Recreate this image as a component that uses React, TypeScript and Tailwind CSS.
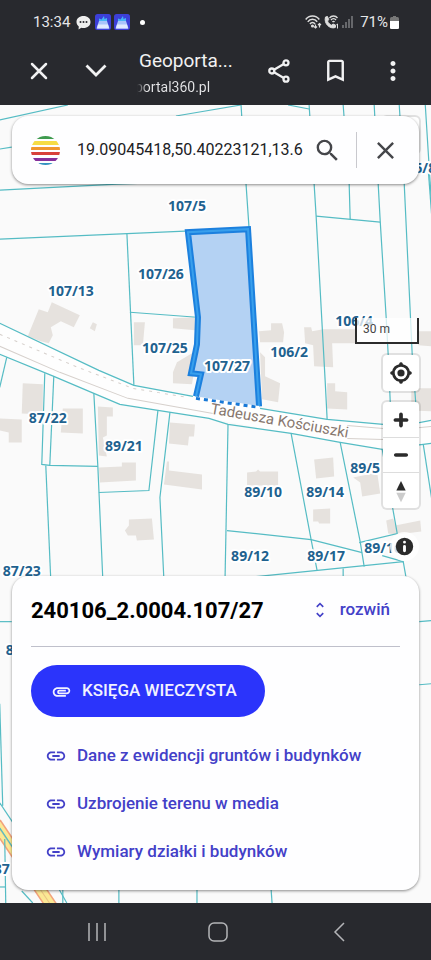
import React, { useState } from 'react';
import {
    MdAttachment,
    MdBookmarkBorder,
    MdClose,
    MdLink,
    MdMoreVert,
    MdSearch,
    MdUnfoldMore,
} from 'react-icons/md';

const PARCEL_LINES = [
    'M0 120 68 105',
    'M0 149 12 147',
    'M176 116 241 105',
    'M0 190 117 184 200 181',
    'M288 105 309 109',
    'M241 105 246 184 249 228',
    'M309 105 314 184 316 216 325 380 327 419',
    'M343 105 349 184 350 219',
    'M374 105 378 184 380 221 386 318 388 355 391 424',
    'M399 105 404 184 412 355 417 423',
    'M425 105 431 200',
    'M428 170 432 223',
    'M316 216 380 222',
    'M0 239 185 231',
    'M127 233 134 385',
    'M130 312 197 317',
    'M0 323 99 370 134 385 193 396',
    'M260 408 327 419 383 424 410 424 431 420',
    'M0 354 54 376 94 393 120 404 158 410 209 418 228 424 291 433 340 442 382 449 423 444 431 443',
    'M7 357 0 387',
    'M45 373 42 464 50 465 98 466',
    'M54 376 50 465',
    'M46 465 51 580',
    'M94 393 98 466 103 580',
    'M99 492 149 490 158 410',
    'M170 412 160 497 164 580',
    'M228 424 225 580',
    'M227 530 311 539 362 552',
    'M291 433 311 539 317 570',
    'M340 442 360 541 364 566',
    'M256 576 364 565 403 561 406 578',
    'M343 568 343 578',
    'M359 542 397 533 382 449',
    'M382 555 403 561',
    'M423 444 432 502',
    'M0 621 12 621',
    'M419 621 431 620',
    'M419 684 431 683',
    'M0 703 3 805',
    'M0 802 14 823',
    'M5 838 6 902',
    'M0 886 6 886',
    'M22 890 33 902',
    'M58 886 67 902',
    'M63 886 63 902',
    'M119 888 119 902',
    'M197 888 197 902',
    'M271 888 272 902',
    'M0 827 14 848',
];

const BUILDINGS = [
    'M39 309 48 312 52 302 80 315 74 327 61 321 51 327 53 335 49 343 41 341 28 336Z',
    'M93 322 97 324 95 331 90 328Z',
    'M134 322 145 322 143 345 134 345Z',
    'M173 318 196 317 195 330 173 328Z',
    'M177 362 192 353 199 351 194 372 192 384 173 383 173 372Z',
    'M23 383 43 384 43 414 22 413Z',
    'M63 408 83 408 83 433 61 432Z',
    'M0 418 22 419 22 442 9 442 9 432 0 430Z',
    'M98 406 113 407 113 416 107 416 107 435 103 437 107 456 99 455Z',
    'M99 467 122 466 122 462 136 462 136 480 100 482Z',
    'M170 422 195 424 194 436 189 436 188 445 169 443Z',
    'M167 461 169 461 169 470 202 474 202 489 164 484Z',
    'M129 519 152 518 154 539 137 540 136 535 128 535 125 530 129 525Z',
    'M259 331 271 330 271 323 282 323 284 332 283 342 260 342Z',
    'M260 352 265 357 265 376 280 383 278 402 262 399Z',
    'M304 327 311 327 312 331 323 329 356 329 356 343 332 343 333 367 314 366 313 345 305 343Z',
    'M327 383 335 383 335 391 347 392 347 409 327 408Z',
    'M418 331 431 331 431 346 418 345Z',
    'M411 388 431 388 431 411 411 410Z',
    'M247 472 256 471 258 469 260 471 278 471 278 485 247 485Z',
    'M314 459 333 457 334 476 316 478Z',
    'M353 477 377 472 380 493 362 496 360 482Z',
    'M313 509 330 508 330 523 319 523 318 521 313 521Z',
    'M386 520 393 518 395 525 420 520 421 531 397 534 388 533Z',
];

const PARCEL_LABELS = [
    { text: '107/5', x: 187, y: 211 },
    { text: '107/26', x: 161, y: 279 },
    { text: '107/13', x: 71, y: 296 },
    { text: '107/25', x: 165, y: 353 },
    { text: '107/27', x: 227, y: 371 },
    { text: '106/2', x: 289, y: 357 },
    { text: '106/4', x: 354, y: 326 },
    { text: '87/22', x: 48, y: 423 },
    { text: '89/21', x: 124, y: 451 },
    { text: '89/10', x: 263, y: 497 },
    { text: '89/14', x: 325, y: 497 },
    { text: '89/5', x: 365, y: 473 },
    { text: '89/12', x: 250, y: 560 },
    { text: '89/17', x: 326, y: 560 },
    { text: '89/16', x: 383, y: 552 },
    { text: '87/23', x: 22, y: 575 },
    { text: '106/8', x: 417, y: 173 },
    { text: '87/5', x: 21, y: 654 },
    { text: '87', x: 2, y: 873 },
];

const LINKS = [
    'Dane z ewidencji gruntów i budynków',
    'Uzbrojenie terenu w media',
    'Wymiary działki i budynków',
];

const LOGO_STRIPES = [
    { color: '#3f9b4f', y: 0, h: 3 },
    { color: '#f6dc45', y: 5, h: 4 },
    { color: '#f0962e', y: 11, h: 3 },
    { color: '#d8413a', y: 16, h: 3 },
    { color: '#85309b', y: 22, h: 3 },
    { color: '#3592c0', y: 27, h: 2 },
];

const PARCEL_PATH = 'M196 396 201 374 191 373 197 344 198 317 188 232 248 229 259 406';

const MapLayer = () => (
    <svg
        className="absolute inset-0 h-full w-full"
        viewBox="0 105 431 797"
        preserveAspectRatio="xMidYMin slice"
        aria-hidden="true"
    >
        <rect x="0" y="105" width="431" height="797" fill="#fafafa" />

        {/* street */}
        <path
            d="M0 323 99 370 134 385 260 408 327 419 383 424 431 420V443L382 449 291 433 209 418 120 404 0 354Z"
            fill="#fefefe"
        />
        <g fill="none" stroke="#d6d0cc">
            <path d="M0 346 60 372 128 398 213 413" />
            <path d="M347 425 383 428 410 428 431 426" />
            <path d="M347 438 383 439" />
            <path d="M0 334 78 367 133 388 187 397" strokeDasharray="3 5" />
        </g>

        <g fill="#e6e2de">
            {BUILDINGS.map((d) => (
                <path key={d} d={d} />
            ))}
        </g>

        {/* main road in the south-west corner */}
        <g fill="none">
            <path d="M-4 822 53 907" stroke="#f2a27c" strokeWidth="12" />
            <path d="M-4 822 53 907" stroke="#fbe894" strokeWidth="9" />
            <path d="M-4 822 53 907" stroke="#e9c384" strokeWidth="1" />
        </g>

        <g fill="none" stroke="#55bcc4" strokeWidth="1.2">
            {PARCEL_LINES.map((d) => (
                <path key={d} d={d} />
            ))}
        </g>

        {/* selected parcel */}
        <path d={`${PARCEL_PATH}Z`} fill="#4a97e8" fillOpacity="0.4" />
        <path d={PARCEL_PATH} fill="none" stroke="#1c80de" strokeWidth="6" />
        <path d={PARCEL_PATH} fill="none" stroke="#389fec" strokeWidth="2" />
        <path d="M196 398 259 407" fill="none" stroke="#fff" strokeWidth="3" />
        <path d="M196 398 259 407" fill="none" stroke="#1878d6" strokeWidth="3" strokeDasharray="4 4" />

        <text
            x="210"
            y="413"
            transform="rotate(10 210 413)"
            className="fill-[#87776e] stroke-white font-['Roboto'] text-[15px] [paint-order:stroke]"
            strokeWidth="2"
        >
            Tadeusza Kościuszki
        </text>

        {PARCEL_LABELS.map((label) => (
            <text
                key={label.text}
                x={label.x}
                y={label.y}
                textAnchor="middle"
                strokeWidth="4"
                strokeLinejoin="round"
                className="fill-[#1f628f] stroke-white font-['Noto_Sans'] text-[14px] font-bold [paint-order:stroke]"
            >
                {label.text}
            </text>
        ))}
    </svg>
);

const AppIcon = () => (
    <svg width="16" height="16" viewBox="0 0 16 16">
        <rect width="16" height="16" rx="2.500" fill="#3c3fd8" />
        <path d="M4 7V4.500l2.500 1L9 2l.5 3L12 4v3Z" fill="#45b4f5" />
        <path d="M4 7h8l2.500 7.500h-13Z" fill="#a9c4fb" />
        <path d="M3 10.500h10l1 4H2Z" fill="#dfe9ff" />
    </svg>
);

const StatusBar = () => (
    <div className="flex h-11 items-center justify-between pr-8 pl-[33px] text-[15px] text-[#e6e6e8]">
        <div className="flex items-center">
            <span>13:34</span>
            <svg className="ml-1.5" width="15" height="15" viewBox="0 0 15 15">
                <path d="M7.500 1C11.600 1 14.500 3.500 14.500 7s-2.900 6-7 6c-.8 0-1.500-.1-2.200-.3L2.500 14.500l.3-3C1.400 10.400.5 8.800.5 7c0-3.500 2.900-6 7-6Z" fill="#eee" />
                <g fill="#28292e">
                    <circle cx="4.500" cy="7" r="1" />
                    <circle cx="7.500" cy="7" r="1" />
                    <circle cx="10.500" cy="7" r="1" />
                </g>
            </svg>
            <div className="ml-1 flex gap-[3px]">
                <AppIcon />
                <AppIcon />
            </div>
            <span className="ml-2.5 h-[5px] w-[5px] rounded-full bg-white" />
        </div>
        <div className="flex items-center">
            <svg width="17" height="14" viewBox="0 0 17 14" fill="none" stroke="#ddd" strokeWidth="1.500">
                <path d="M.7 4.500C4-.2 11-.2 14.300 4.500M2.800 6.800c2.300-3.400 7-3.400 9.400 0M5 9c1.300-2 3.700-2 5 0" />
                <path d="M10.500 9.500V13M9 11.500l1.500 1.500 1.500-1.500M14.500 12.500V8.500M13 10l1.500-1.500L16 10" strokeWidth="1.200" />
                <circle cx="7.500" cy="11" r=".8" />
            </svg>
            <svg className="ml-0.5" width="15" height="14" viewBox="0 0 15 14" fill="none" stroke="#ddd">
                <path d="M1.500 2 3.500 1.500l1.200 3.200L3.500 6C4.200 8 5.800 9.500 7.600 10.200L9 9l2.700 1.200-.4 2.300C6 14.500-.5 8.500 1.500 2Z" fill="#ddd" />
                <path d="M5.500 3c2-2.700 6-2.700 8 0M7 5c1.300-1.800 3.700-1.800 5 0M8.500 7c.6-.8 1.400-.8 2 0" strokeWidth="1.300" />
                <path d="M12.500 9.500 13.500 9v4.500" />
            </svg>
            <svg className="ml-[3px]" width="12" height="12" viewBox="0 0 12 12" fill="#66676b">
                <path d="M0 9h2v3H0zM3 6h2v6H3zM6 3h2v9H6zM9 0h2v12H9z" />
            </svg>
            <span className="ml-1.5">71%</span>
            <svg className="ml-0.5" width="9" height="13" viewBox="0 0 9 13">
                <path d="M3 0h3v1.500H3z" fill="#777" />
                <rect y="1" width="9" height="12" rx="1.500" fill="#777" />
                <path d="M0 5h9v6.500a1.500 1.500 0 0 1-1.500 1.500h-6A1.500 1.500 0 0 1 0 11.500Z" fill="#fff" />
            </svg>
        </div>
    </div>
);

const BrowserBar = () => {
    const button = 'flex h-12 w-[57px] shrink-0 items-center justify-center';
    return (
        <div className="flex h-[53px] items-center px-2.5 text-[#f1f1f2]">
            <button className={button} aria-label="Zamknij">
                <svg width="18" height="18" viewBox="0 0 18 18" fill="none" stroke="currentColor" strokeWidth="2.500" strokeLinecap="round">
                    <path d="M2 2 16 16M16 2 2 16" />
                </svg>
            </button>
            <button className={button} aria-label="Minimalizuj">
                <svg width="22" height="14" viewBox="0 0 22 14" fill="none" stroke="currentColor" strokeWidth="2.800">
                    <path d="M1.500 1.500 11 11l9.500-9.500" />
                </svg>
            </button>
            <div className="min-w-0 flex-1 pt-1.5 pl-[15px]">
                <div className="text-[19px] leading-[26px] whitespace-nowrap">Geoporta...</div>
                <div className="text-[14px] leading-[26px]">
                    <span className="-ml-1 bg-linear-to-r from-transparent from-[2px] to-[#e6e6e8] to-[12px] bg-clip-text text-transparent">
                        portal360.pl
                    </span>
                </div>
            </div>
            <button className={button} aria-label="Udostępnij">
                <svg width="22" height="24" viewBox="0 0 22 24" fill="none" stroke="currentColor" strokeWidth="2.300">
                    <circle cx="18" cy="3.800" r="2.500" />
                    <circle cx="3.800" cy="12" r="2.500" />
                    <circle cx="18" cy="20.200" r="2.500" />
                    <path d="M6 10.700 15.800 5.100M6 13.300l9.800 5.600" />
                </svg>
            </button>
            <button className={button} aria-label="Dodaj zakładkę">
                <MdBookmarkBorder size={29} />
            </button>
            <button className={button} aria-label="Więcej">
                <MdMoreVert size={30} />
            </button>
        </div>
    );
};

const SearchBar = () => {
    const [query, setQuery] = useState('19.09045418,50.40223121,13.6');

    return (
        <form className="relative mx-3 mt-[11px] flex h-[68px] items-center rounded-2xl bg-[#fefeff] pr-[19px] pl-[19px] shadow-[0_1px_3px_rgba(0,0,0,0.45)]">
            <svg width="29" height="29" viewBox="0 0 29 29" className="shrink-0">
                <clipPath id="logo-circle">
                    <circle cx="14.500" cy="14.500" r="14.500" />
                </clipPath>
                <g clipPath="url(#logo-circle)">
                    {LOGO_STRIPES.map((s) => (
                        <rect key={s.color} x="0" y={s.y} width="29" height={s.h} fill={s.color} />
                    ))}
                </g>
            </svg>
            <input
                aria-label="Szukaj działki"
                value={query}
                onChange={(e) => setQuery(e.target.value)}
                className="ml-[17px] min-w-0 flex-1 bg-transparent text-base text-[#202124] outline-none"
            />
            <button type="button" aria-label="Szukaj" className="ml-2 text-[#45464a]">
                <MdSearch size={29} />
            </button>
            <span className="mx-3.5 h-9 w-px bg-[#c9c9ce]" />
            <button type="button" aria-label="Wyczyść" className="text-[#45464a]">
                <MdClose size={29} />
            </button>
        </form>
    );
};

const MapControls = () => {
    const box = 'rounded bg-white shadow-[0_0_0_2px_rgba(0,0,0,0.1)]';
    return (
        <div className="relative mt-auto mr-3 mb-[15px] flex flex-col items-end self-end text-[#2b2b2b]">
            <div className="h-[26px] w-16 border-2 border-t-0 border-[#2b2b2b] bg-white/75 px-1.5 text-[12px] leading-[22px] text-[#444]">
                30 m
            </div>
            <button aria-label="Moja lokalizacja" className={`mt-[11px] h-9 w-9 ${box}`}>
                <svg width="36" height="36" viewBox="0 0 20 20" fill="currentColor">
                    <path d="M10 4C9 4 9 5 9 5v.1A5 5 0 0 0 5.100 9H5s-1 0-1 1 1 1 1 1h.1A5 5 0 0 0 9 14.900v.1s0 1 1 1 1-1 1-1v-.1a5 5 0 0 0 3.900-3.900h.1s1 0 1-1-1-1-1-1h-.1A5 5 0 0 0 11 5.100V5s0-1-1-1zm0 2.500a3.500 3.500 0 1 1 0 7 3.500 3.500 0 1 1 0-7z" />
                    <circle cx="10" cy="10" r="2" />
                </svg>
            </button>
            <div className={`mt-[11px] flex w-9 flex-col divide-y divide-[#ddd] ${box}`}>
                <button aria-label="Przybliż" className="h-9">
                    <svg width="36" height="36" viewBox="0 0 29 29" fill="currentColor">
                        <path d="M14.500 8.500c-.75 0-1.500.75-1.500 1.500v3h-3c-.75 0-1.500.75-1.500 1.500S9.250 16 10 16h3v3c0 .75.75 1.500 1.500 1.500S16 19.750 16 19v-3h3c.75 0 1.500-.75 1.500-1.500S19.750 13 19 13h-3v-3c0-.75-.75-1.500-1.500-1.500z" />
                    </svg>
                </button>
                <button aria-label="Oddal" className="h-[35px]">
                    <svg width="36" height="34" viewBox="0 0 29 29" fill="currentColor">
                        <path d="M10 13c-.75 0-1.500.75-1.500 1.500S9.250 16 10 16h9c.75 0 1.500-.75 1.500-1.500S19.750 13 19 13h-9z" />
                    </svg>
                </button>
                <button aria-label="Północ" className="h-[35px]">
                    <svg width="36" height="34" viewBox="0 0 29 29">
                        <path d="m10.500 14 4-8 4 8z" fill="#2b2b2b" />
                        <path d="m10.500 16 4 8 4-8z" fill="#ccc" />
                    </svg>
                </button>
            </div>
            <button aria-label="Informacje" className="mt-6 h-[29px] w-[29px] rounded-full bg-white/80">
                <svg width="29" height="29" viewBox="0 0 20 20" fill="currentColor" fillRule="evenodd">
                    <path d="M4 10a6 6 0 1 0 12 0 6 6 0 1 0-12 0m5-3a1 1 0 1 0 2 0 1 1 0 1 0-2 0m0 3a1 1 0 1 1 2 0v3a1 1 0 1 1-2 0" />
                </svg>
            </button>
        </div>
    );
};

const ParcelSheet = () => (
    <section className="relative mx-3 mb-[13px] rounded-2xl bg-[#fefeff] px-[19px] pt-4 pb-3.5 shadow-[0_1px_3px_rgba(0,0,0,0.45)]">
        <div className="flex h-9 items-center justify-between">
            <h1 className="text-[22px] font-bold text-black">240106_2.0004.107/27</h1>
            <button className="mr-2.5 flex items-center gap-2.5 text-[17px] font-medium text-[#4340c8]">
                <MdUnfoldMore size={20} />
                rozwiń
            </button>
        </div>
        <hr className="mt-[18px] border-[#bfc0cb]" />
        <button className="mt-[18px] flex h-[52px] items-center gap-2.5 rounded-full bg-[#2b34fb] pr-7 pl-5 text-[17px] font-medium text-[#f2f2ff]">
            <MdAttachment size={21} />
            KSIĘGA WIECZYSTA
        </button>
        <nav className="mt-[15px] flex flex-col">
            {LINKS.map((label) => (
                <a
                    key={label}
                    href="#"
                    className="flex h-12 items-center gap-2.5 pl-3.5 text-[17px] font-medium text-[#4340c8]"
                >
                    <MdLink size={22} />
                    {label}
                </a>
            ))}
        </nav>
    </section>
);

const SystemNav = () => {
    const button = 'flex w-[121px] items-center justify-center';
    return (
        <nav className="flex h-[57px] justify-center bg-[#28292e] pl-1 text-[#b4b5b8]">
            <button className={button} aria-label="Ostatnie">
                <svg width="18" height="18" viewBox="0 0 18 18" stroke="currentColor" strokeWidth="1.500">
                    <path d="M1 0V18M9 0V18M17 0V18" />
                </svg>
            </button>
            <button className={button} aria-label="Ekran główny">
                <svg width="20" height="20" viewBox="0 0 20 20" fill="none" stroke="currentColor" strokeWidth="1.500">
                    <rect x="1" y="1" width="18" height="18" rx="5" />
                </svg>
            </button>
            <button className={button} aria-label="Wstecz">
                <svg width="12" height="20" viewBox="0 0 12 20" fill="none" stroke="currentColor" strokeWidth="1.500">
                    <path d="M11 1 2 10l9 9" />
                </svg>
            </button>
        </nav>
    );
};

const App = () => {
    return (
        <div className="flex min-h-screen flex-col bg-[#28292e] font-['Roboto',sans-serif]">
            <header className="pb-2">
                <StatusBar />
                <BrowserBar />
            </header>
            <main className="relative flex flex-1 flex-col overflow-hidden">
                <MapLayer />
                <div className="absolute top-3 right-3 h-9 w-9 rounded bg-white shadow-[0_0_0_2px_rgba(0,0,0,0.1)]" />
                <SearchBar />
                <MapControls />
                <ParcelSheet />
            </main>
            <SystemNav />
        </div>
    );
};

export default App;
